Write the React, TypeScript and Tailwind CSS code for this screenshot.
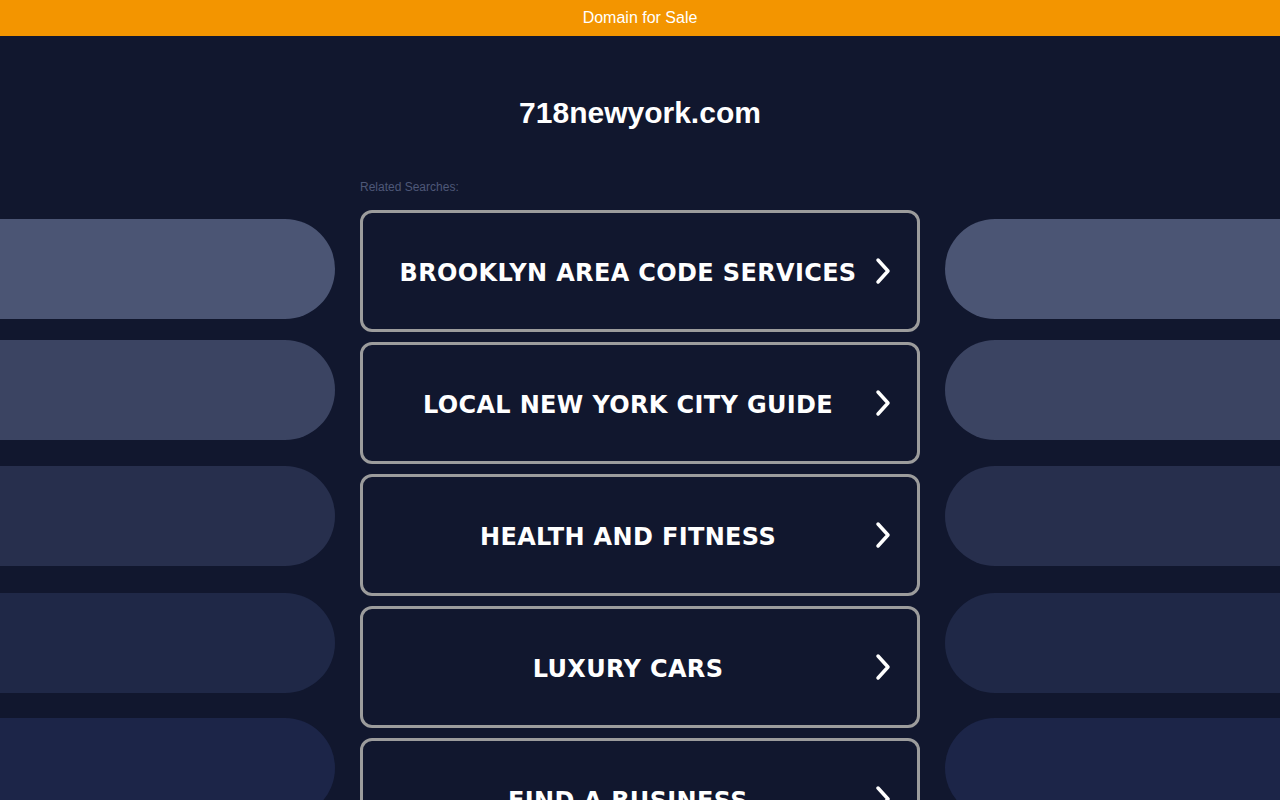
import React from 'react'

const searches = [
  'BROOKLYN AREA CODE SERVICES',
  'LOCAL NEW YORK CITY GUIDE',
  'HEALTH AND FITNESS',
  'LUXURY CARS',
  'FIND A BUSINESS',
]

const pills = [
  { bg: 'bg-[#4b5574]', mt: 'mt-[9px]' },
  { bg: 'bg-[#3b4462]', mt: 'mt-[21px]' },
  { bg: 'bg-[#272f4d]', mt: 'mt-[26px]' },
  { bg: 'bg-[#1f2847]', mt: 'mt-[27px]' },
  { bg: 'bg-[#1c2548]', mt: 'mt-[25px]' },
]

function Chevron() {
  return (
    <svg width="20" height="30" viewBox="0 0 20 30" fill="none" className="shrink-0">
      <polyline points="5,4 15,15 5,26" stroke="#ffffff" strokeWidth="3.5" strokeLinecap="round" strokeLinejoin="round" />
    </svg>
  )
}

function SideColumn({ side }: { side: 'left' | 'right' }) {
  return (
    <div className="w-[335px] shrink-0 flex flex-col">
      {pills.map((p, i) => (
        <div
          key={i}
          className={`h-[100px] shrink-0 ${p.bg} ${p.mt} ${side === 'left' ? 'rounded-r-[50px]' : 'rounded-l-[50px]'}`}
        />
      ))}
    </div>
  )
}

export default function App() {
  return (
    <div className="h-[800px] overflow-hidden bg-[#11172e] font-['Liberation_Sans',Arial,sans-serif]">
      <div className="h-9 bg-[#f39500] flex items-center justify-center text-white text-[16px]">
        Domain for Sale
      </div>

      <h1 className="mt-[59px] text-center text-white font-bold text-[30px] leading-[36px]">718newyork.com</h1>

      <div className="w-[560px] mx-auto mt-[48px] text-[12px] leading-[16px] text-[#4e5878]">Related Searches:</div>

      <div className="mt-[15px] flex justify-between">
        <SideColumn side="left" />

        <div className="w-[560px] shrink-0 flex flex-col gap-[10px]">
          {searches.map((s) => (
            <a
              key={s}
              href="#"
              className="h-[122px] shrink-0 rounded-[12px] border-[3px] border-[#9c9c9c] flex items-center pl-[20px] pr-[24px]"
            >
              <span className="flex-1 pt-[4px] text-center text-white font-bold text-[24px] tracking-[0.35px] font-['DejaVu_Sans',Verdana,sans-serif]">
                {s}
              </span>
              <Chevron />
            </a>
          ))}
        </div>

        <SideColumn side="right" />
      </div>
    </div>
  )
}
